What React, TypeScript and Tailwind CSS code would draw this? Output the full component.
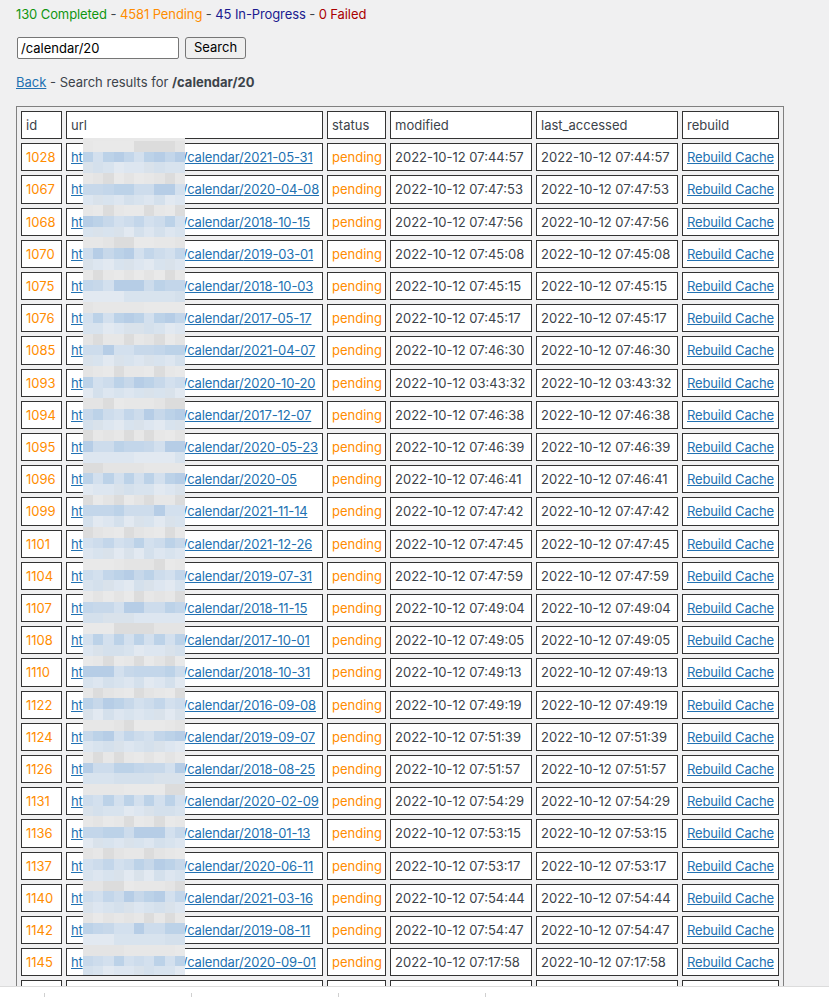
import React from "react";

type Row = { id: number; path: string; time: string };

const rows: Row[] = [
  { id: 1028, path: "2021-05-31", time: "07:44:57" },
  { id: 1067, path: "2020-04-08", time: "07:47:53" },
  { id: 1068, path: "2018-10-15", time: "07:47:56" },
  { id: 1070, path: "2019-03-01", time: "07:45:08" },
  { id: 1075, path: "2018-10-03", time: "07:45:15" },
  { id: 1076, path: "2017-05-17", time: "07:45:17" },
  { id: 1085, path: "2021-04-07", time: "07:46:30" },
  { id: 1093, path: "2020-10-20", time: "03:43:32" },
  { id: 1094, path: "2017-12-07", time: "07:46:38" },
  { id: 1095, path: "2020-05-23", time: "07:46:39" },
  { id: 1096, path: "2020-05", time: "07:46:41" },
  { id: 1099, path: "2021-11-14", time: "07:47:42" },
  { id: 1101, path: "2021-12-26", time: "07:47:45" },
  { id: 1104, path: "2019-07-31", time: "07:47:59" },
  { id: 1107, path: "2018-11-15", time: "07:49:04" },
  { id: 1108, path: "2017-10-01", time: "07:49:05" },
  { id: 1110, path: "2018-10-31", time: "07:49:13" },
  { id: 1122, path: "2016-09-08", time: "07:49:19" },
  { id: 1124, path: "2019-09-07", time: "07:51:39" },
  { id: 1126, path: "2018-08-25", time: "07:51:57" },
  { id: 1131, path: "2020-02-09", time: "07:54:29" },
  { id: 1136, path: "2018-01-13", time: "07:53:15" },
  { id: 1137, path: "2020-06-11", time: "07:53:17" },
  { id: 1140, path: "2021-03-16", time: "07:54:44" },
  { id: 1142, path: "2019-08-11", time: "07:54:47" },
  { id: 1145, path: "2020-09-01", time: "07:17:58" },
];

const blue = ["#c3d6ea", "#bcd2e8", "#cddcec", "#b6cde6", "#d3e0ee", "#c7d8ea"];
const light = ["#d8e3ee", "#dde6f0", "#d4e0ec", "#e2e9f1", "#d9e2eb"];
const gray = ["#e7e7e7", "#e9e9e9", "#dcdcdc", "#e4e4e4"];

// pixelated blur block that hides the host part of the urls
const Blur: React.FC = () => {
  const cells: string[] = [];
  for (let r = 0; r < 78; r++) {
    const kind = r % 3;
    for (let c = 0; c < 10; c++) {
      const h = (r * 7 + c * 13 + ((r * c) % 5)) % 17;
      const set = kind === 0 ? gray : kind === 1 ? blue : light;
      cells.push(set[h % set.length]);
    }
  }
  return (
    <div className="absolute left-[67px] top-[32px] w-[102px] h-[837px] bg-[#e8e8e8] pt-[3px] overflow-hidden">
      <div className="grid grid-cols-10 auto-rows-[10.73px]">
        {cells.map((col, i) => (
          <div key={i} style={{ backgroundColor: col }} />
        ))}
      </div>
    </div>
  );
};

const cell = "border border-[#333] bg-white px-[4px] py-[5px] leading-[16.2px] text-left font-normal whitespace-nowrap overflow-hidden";

export default function App() {
  return (
    <div
      className="min-h-screen bg-[#f0f0f1] text-[13px] text-[#3c434a] pl-4 pt-[5px] pb-10"
      style={{ fontFamily: "Inter, 'Liberation Sans', sans-serif" }}
    >
      <p className="leading-[18px] tracking-[-0.1px]">
        <span className="text-[#119611]">130 Completed</span> -{" "}
        <span className="text-[#ff8c00]">4581 Pending</span> -{" "}
        <span className="text-[#1a1a8f]">45 In-Progress</span> -{" "}
        <span className="text-[#a00]">0 Failed</span>
      </p>

      <form className="flex items-center gap-[6px] mt-[14px] ml-px" onSubmit={(e) => e.preventDefault()}>
        <input
          type="text"
          defaultValue="/calendar/20"
          className="w-[162px] h-[22px] bg-white border border-[#767676] rounded-[2px] px-[3px] text-[13px] text-black outline-none"
        />
        <button className="h-[22px] px-[8px] bg-[#efefef] border border-[#767676] rounded-[3px] text-[13px] text-black">
          Search
        </button>
      </form>

      <p className="mt-[14px] leading-[18px]">
        <a href="#" className="text-[#2271b1] underline">
          Back
        </a>{" "}
        - Search results for <b className="font-bold">/calendar/20</b>
      </p>

      <div className="relative mt-[15px] w-fit">
        <table className="border border-[#808080] border-separate border-spacing-[4px] table-fixed w-[768px]">
          <colgroup>
            <col className="w-[41px]" />
            <col className="w-[257px]" />
            <col className="w-[59px]" />
            <col className="w-[142px]" />
            <col className="w-[142px]" />
            <col className="w-[97px]" />
          </colgroup>
          <thead>
            <tr>
              <th className={cell}>id</th>
              <th className={cell}>url</th>
              <th className={cell}>status</th>
              <th className={cell}>modified</th>
              <th className={cell}>last_accessed</th>
              <th className={cell}>rebuild</th>
            </tr>
          </thead>
          <tbody>
            {rows.map((r) => (
              <tr key={r.id}>
                <td className={cell + " text-[#ff8c00]"}>{r.id}</td>
                <td className={cell}>
                  <a href="#" className="text-[#2271b1] underline tracking-[-0.15px]">
                    ht<span className="inline-block w-[100px] h-[1px]" />
                    /calendar/{r.path}
                  </a>
                </td>
                <td className={cell + " text-[#ff8c00]"}>pending</td>
                <td className={cell + " text-center"}>2022-10-12 {r.time}</td>
                <td className={cell + " text-center"}>2022-10-12 {r.time}</td>
                <td className={cell}>
                  <a href="#" className="text-[#2271b1] underline tracking-[-0.15px]">
                    Rebuild Cache
                  </a>
                </td>
              </tr>
            ))}
            {/* next row, cut off by the bottom bar */}
            <tr>
              <td className={cell + " h-[28px]"} />
              <td className={cell} />
              <td className={cell} />
              <td className={cell} />
              <td className={cell} />
              <td className={cell} />
            </tr>
          </tbody>
        </table>
        <Blur />
      </div>

      <div className="fixed left-0 right-0 bottom-0 h-[11px] bg-white border-t border-[#dcdcdc]">
        <div className="absolute left-[44px] top-[6px] h-[5px] w-px bg-[#d0d0d0]" />
        <div className="absolute left-[191px] top-[6px] h-[5px] w-px bg-[#d0d0d0]" />
        <div className="absolute left-[338px] top-[6px] h-[5px] w-px bg-[#d0d0d0]" />
        <div className="absolute left-[485px] top-[6px] h-[5px] w-px bg-[#d0d0d0]" />
      </div>
    </div>
  );
}
